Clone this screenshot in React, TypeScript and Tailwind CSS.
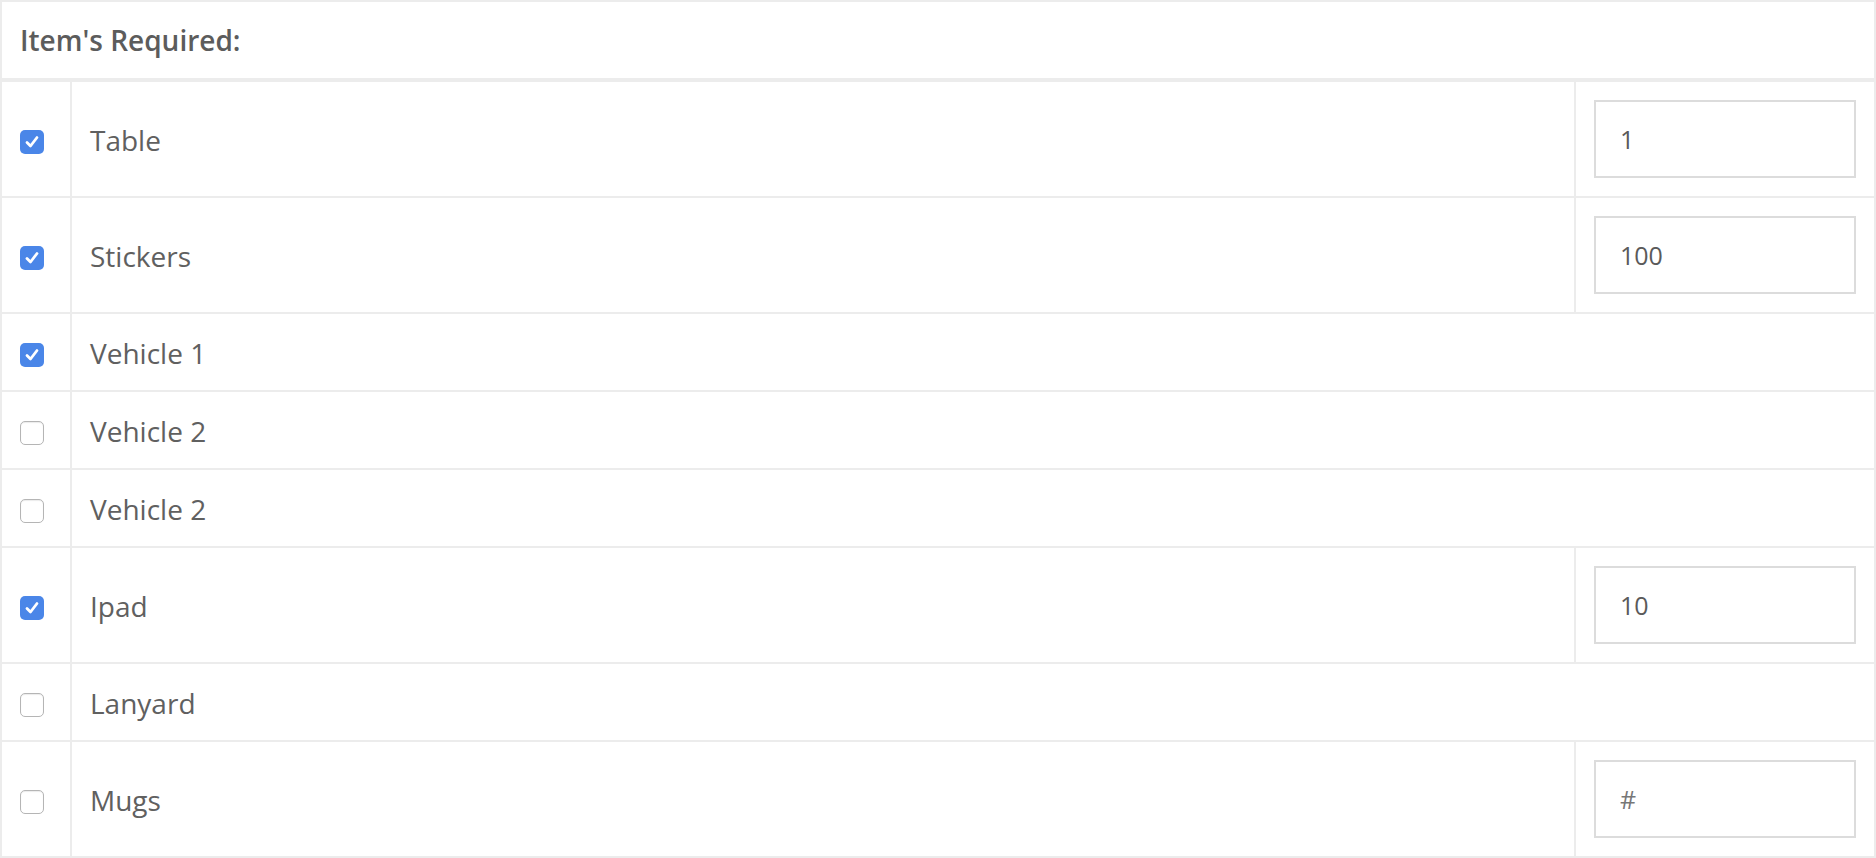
const items = [
  { name: "Table", checked: true, qty: "1" },
  { name: "Stickers", checked: true, qty: "100" },
  { name: "Vehicle 1", checked: true },
  { name: "Vehicle 2", checked: false },
  { name: "Vehicle 2", checked: false },
  { name: "Ipad", checked: true, qty: "10" },
  { name: "Lanyard", checked: false },
  { name: "Mugs", checked: false, qty: "", placeholder: "#" },
];

function Checkbox({ checked }: { checked: boolean }) {
  if (checked) {
    return (
      <span className="flex h-6 w-6 items-center justify-center rounded-[5px] bg-[#4a86e8]">
        <svg width="20" height="20" viewBox="0 0 20 20" fill="none">
          <path d="M5 10.5 L8.5 14 L15 5.5" stroke="white" strokeWidth="2.8" strokeLinecap="round" strokeLinejoin="round" />
        </svg>
      </span>
    );
  }
  return <span className="block h-6 w-6 rounded-[5px] border border-[#b5b5b5] bg-white shadow-[inset_0_1px_1px_rgba(0,0,0,0.08)]" />;
}

export default function App() {
  return (
    <div className="w-[1876px] bg-white font-['Open_Sans',sans-serif] text-[#606060]">
      <div className="border-2 border-[#ececec]">
        {/* header */}
        <div className="flex h-[80px] items-center border-b-4 border-[#ececec] pl-[18px] text-[28px] font-semibold text-[#5c5c5c]">
          Item's Required:
        </div>

        {items.map((item, i) => (
          <div key={i} className={`flex ${i > 0 ? "border-t-2 border-[#ececec]" : ""}`}>
            <div className="flex w-[70px] shrink-0 items-center border-r-2 border-[#ececec] pl-[18px] pt-[6px]">
              <Checkbox checked={item.checked} />
            </div>
            {item.qty !== undefined ? (
              <>
                <div className="flex flex-1 items-center pl-[18px] pt-[2px] text-[28px]">{item.name}</div>
                <div className="w-[300px] shrink-0 border-l-2 border-[#ececec] px-[18px] py-[18px]">
                  <input
                    className="h-[78px] w-full border-2 border-[#dcdcdc] bg-white pl-[24px] text-[25px] text-[#5a5a5a] placeholder:text-[#777] outline-none"
                    defaultValue={item.qty}
                    placeholder={item.placeholder}
                  />
                </div>
              </>
            ) : (
              <div className="flex h-[76px] flex-1 items-center pl-[18px] pt-[2px] text-[28px]">{item.name}</div>
            )}
          </div>
        ))}
      </div>
    </div>
  );
}
